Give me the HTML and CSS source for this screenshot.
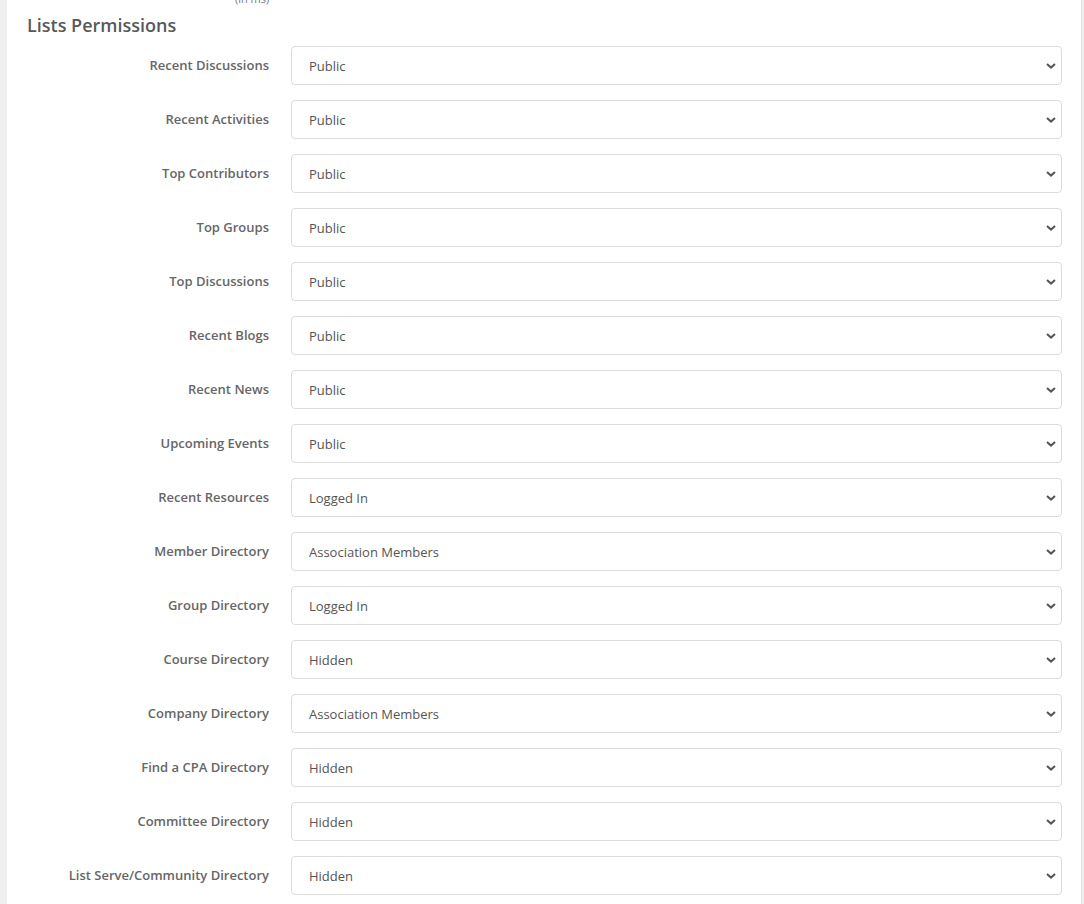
FILE: index.html
```html
<!DOCTYPE html>
<html lang="en">
<head>
  <meta charset="UTF-8">
  <meta name="viewport" content="width=device-width, initial-scale=1">
  <title>Lists Permissions</title>
  <link rel="stylesheet" href="styles.css">
</head>
<body>

  <div class="panel">
    <div class="cut-note">(in ms)</div>
    <h3>Lists Permissions</h3>

    <form class="perm-form" id="permForm"></form>
  </div>

  <script>
    const rows = [
      ["Recent Discussions", "Public"],
      ["Recent Activities", "Public"],
      ["Top Contributors", "Public"],
      ["Top Groups", "Public"],
      ["Top Discussions", "Public"],
      ["Recent Blogs", "Public"],
      ["Recent News", "Public"],
      ["Upcoming Events", "Public"],
      ["Recent Resources", "Logged In"],
      ["Member Directory", "Association Members"],
      ["Group Directory", "Logged In"],
      ["Course Directory", "Hidden"],
      ["Company Directory", "Association Members"],
      ["Find a CPA Directory", "Hidden"],
      ["Committee Directory", "Hidden"],
      ["List Serve/Community Directory", "Hidden"]
    ];
    const options = ["Public", "Logged In", "Association Members", "Hidden"];

    const form = document.getElementById("permForm");
    rows.forEach(([label, value]) => {
      const row = document.createElement("div");
      row.className = "form-row";

      const lbl = document.createElement("label");
      lbl.textContent = label;
      row.appendChild(lbl);

      const wrap = document.createElement("div");
      wrap.className = "select-wrap";
      const sel = document.createElement("select");
      options.forEach(opt => {
        const o = document.createElement("option");
        o.textContent = opt;
        if (opt === value) o.selected = true;
        sel.appendChild(o);
      });
      wrap.appendChild(sel);
      wrap.insertAdjacentHTML("beforeend",
        '<svg class="chevron" width="10" height="6" viewBox="0 0 10 6"><path d="M1 1l4 3.6L9 1" fill="none" stroke="#555" stroke-width="2"/></svg>');
      row.appendChild(wrap);

      form.appendChild(row);
    });
  </script>

</body>
</html>
```

FILE: styles.css
```css
body {
  font-family: 'Open Sans', sans-serif;
  margin: 0;
  padding: 0;
  background: #efefef;
  color: #555;
  overflow: hidden;
}

.panel {
  background: #ffffff;
  margin: 0 2px 0 7px;
  border-right: 1px solid #e3e3e3;
  padding: 0 19px 40px 20px;
  min-height: 100vh;
  box-sizing: border-box;
}

.cut-note {
  font-size: 11px;
  line-height: 12px;
  color: #777;
  margin-top: -7px;
  padding-left: 208px;
  height: 8px;
}

h3 {
  font-size: 18px;
  font-weight: 600;
  line-height: 24px;
  color: #595959;
  margin: 12px 0 9px 0;
}

.form-row {
  display: grid;
  grid-template-columns: 242px 1fr;
  column-gap: 22px;
  margin-bottom: 15px;
}

.form-row label {
  text-align: right;
  font-size: 13px;
  font-weight: 600;
  color: #666;
  line-height: 39px;
}

.select-wrap {
  position: relative;
}

select {
  appearance: none;
  -webkit-appearance: none;
  width: 100%;
  height: 39px;
  padding: 0 30px 0 17px;
  border: 1px solid #dcdcdc;
  border-radius: 4px;
  background: #ffffff;
  font-family: 'Open Sans', sans-serif;
  font-size: 13px;
  color: #555;
  box-sizing: border-box;
}

.chevron {
  position: absolute;
  right: 6px;
  top: 17px;
  pointer-events: none;
}
```
